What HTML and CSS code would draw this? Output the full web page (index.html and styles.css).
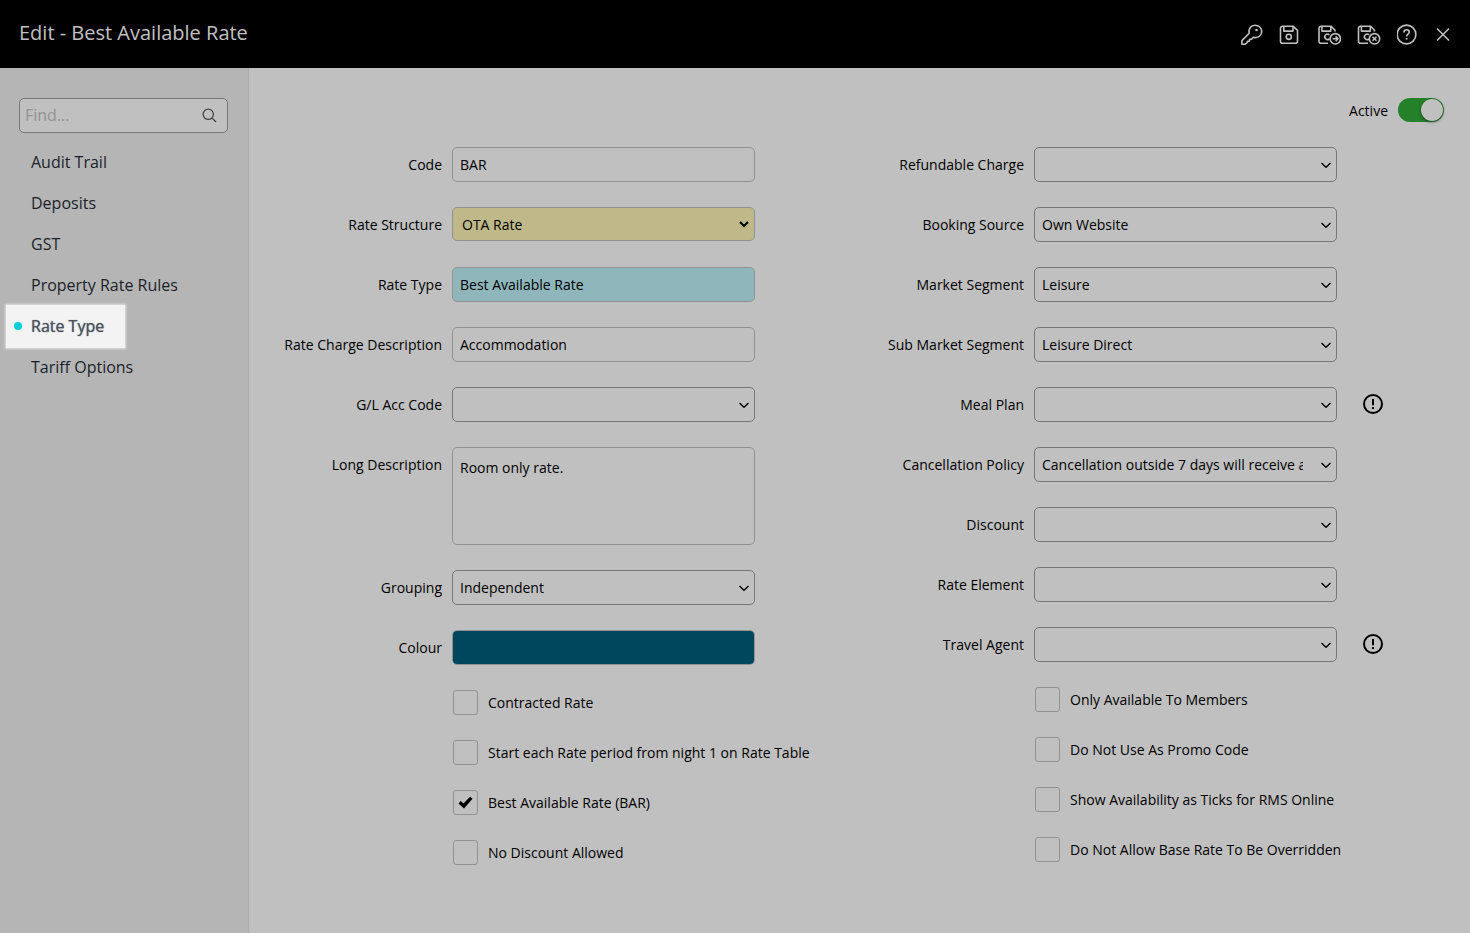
FILE: index.html
```html
<!DOCTYPE html>
<html lang="en">
<head>
  <meta charset="UTF-8" />
  <meta name="viewport" content="width=device-width, initial-scale=1.0"/>
  <title>Edit - Best Available Rate</title>
  <link rel="stylesheet" href="styles.css">
</head>
<body>
  <header class="topbar">
    <h1>Edit - Best Available Rate</h1>
    <div class="tools">
      <button type="button" aria-label="Security">
        <svg width="22" height="24" viewBox="0 0 22 24"><path d="M8.2 11.2C7.2 6.8 10 3.2 14 3.2c3.8 0 6.7 2.8 6.7 6.3 0 3.7-3 6.3-6.9 6.1l-1.500-.3-1.700 1.900H8.500v2H6.400v1.300L4.300 22.200H.9v-3.600z"/><circle class="dot" cx="15.5" cy="8" r="1.3"/></svg>
      </button>
      <button type="button" aria-label="Save">
        <svg width="22" height="24" viewBox="0 0 22 24"><path d="M3.5 4.3h10.700l4.300 4v10.900a2 2 0 0 1-2 2h-13a2 2 0 0 1-2-2v-12.900a2 2 0 0 1 2-2zM4.800 4.500v4.600h9.200v-4.600"/><circle cx="9.8" cy="14.8" r="2.6"/></svg>
      </button>
      <button type="button" aria-label="Save and continue">
        <svg width="24" height="24" viewBox="0 0 24 24"><path d="M11 21.200H4a2 2 0 0 1-2-2V6.300a2 2 0 0 1 2-2h10.200l3.800 4v1.200M4.900 4.500v4.600h8.900v-4.600M12.400 12.900a2.700 2.700 0 1 0 0 3.900"/><circle cx="18.3" cy="16.8" r="5.2"/><path d="M15.500 16.800h5.400M18.600 14.400l2.400 2.400-2.400 2.400"/></svg>
      </button>
      <button type="button" aria-label="Save and close">
        <svg width="24" height="24" viewBox="0 0 24 24"><path d="M11 21.200H3.500a2 2 0 0 1-2-2V6.300a2 2 0 0 1 2-2h10.200l3.800 4v1.200M4.400 4.500v4.600h8.900v-4.600M12 12.900a2.700 2.700 0 1 0 0 3.900"/><circle cx="17.5" cy="16.8" r="5.2"/><path d="M15.500 14.800l4 4M19.500 14.800l-4 4"/></svg>
      </button>
      <button type="button" aria-label="Help">
        <svg width="20" height="24" viewBox="0 0 20 24"><circle cx="9.5" cy="12.5" r="9.4"/><path d="M6.900 10.400c0-1.700 1.100-2.700 2.700-2.700s2.700 1 2.700 2.400c0 1.900-2.700 2.100-2.700 4.300"/><circle class="dot" cx="9.6" cy="16.8" r="1"/></svg>
      </button>
      <button type="button" aria-label="Close">
        <svg width="20" height="24" viewBox="0 0 20 24"><path d="M4 6.500l12 12M16 6.500l-12 12"/></svg>
      </button>
    </div>
  </header>

  <div class="layout">
    <aside class="sidebar">
      <div class="search">
        <input type="text" placeholder="Find..." aria-label="Find">
        <svg width="15" height="15" viewBox="0 0 16 16"><circle cx="6.7" cy="6.7" r="5.5"/><path d="M10.800 10.800l4.200 4.200"/></svg>
      </div>
      <nav class="menu">
        <a href="#">Audit Trail</a>
        <a href="#">Deposits</a>
        <a href="#">GST</a>
        <a href="#">Property Rate Rules</a>
        <a href="#" class="current">Rate Type</a>
        <a href="#">Tariff Options</a>
      </nav>
    </aside>

    <main class="content">
      <div class="status">
        <label for="active">Active</label>
        <input type="checkbox" id="active" class="toggle" checked>
      </div>

      <form class="form">
        <!-- left column -->
        <div class="column">
          <div class="row">
            <label for="code">Code</label>
            <input type="text" id="code" class="field" value="BAR">
          </div>
          <div class="row">
            <label for="structure">Rate Structure</label>
            <select id="structure" class="field required"><option>OTA Rate</option></select>
          </div>
          <div class="row">
            <label for="type">Rate Type</label>
            <input type="text" id="type" class="field lookup" value="Best Available Rate">
          </div>
          <div class="row">
            <label for="charge">Rate Charge Description</label>
            <input type="text" id="charge" class="field" value="Accommodation">
          </div>
          <div class="row">
            <label for="gl">G/L Acc Code</label>
            <select id="gl" class="field"><option></option></select>
          </div>
          <div class="row">
            <label for="long">Long Description</label>
            <textarea id="long" class="field">Room only rate.</textarea>
          </div>
          <div class="row">
            <label for="grouping">Grouping</label>
            <select id="grouping" class="field"><option>Independent</option></select>
          </div>
          <div class="row">
            <label for="colour">Colour</label>
            <input type="color" id="colour" class="field colour" value="#00475e">
          </div>
          <div class="check"><input type="checkbox" id="contracted"><label for="contracted">Contracted Rate</label></div>
          <div class="check"><input type="checkbox" id="night"><label for="night">Start each Rate period from night 1 on Rate Table</label></div>
          <div class="check"><input type="checkbox" id="bar" checked><label for="bar">Best Available Rate (BAR)</label></div>
          <div class="check"><input type="checkbox" id="nodiscount"><label for="nodiscount">No Discount Allowed</label></div>
        </div>

        <!-- right column -->
        <div class="column">
          <div class="row">
            <label for="refundable">Refundable Charge</label>
            <select id="refundable" class="field"><option></option></select>
          </div>
          <div class="row">
            <label for="source">Booking Source</label>
            <select id="source" class="field"><option>Own Website</option></select>
          </div>
          <div class="row">
            <label for="market">Market Segment</label>
            <select id="market" class="field"><option>Leisure</option></select>
          </div>
          <div class="row">
            <label for="submarket">Sub Market Segment</label>
            <select id="submarket" class="field"><option>Leisure Direct</option></select>
          </div>
          <div class="row">
            <label for="meal">Meal Plan</label>
            <select id="meal" class="field"><option></option></select>
            <button type="button" class="info" aria-label="Meal Plan information">
              <svg width="20" height="20" viewBox="0 0 20 20"><circle cx="10" cy="10" r="9"/><path d="M10 5v6.200M10 13v2"/></svg>
            </button>
          </div>
          <div class="row">
            <label for="cancel">Cancellation Policy</label>
            <select id="cancel" class="field"><option>Cancellation outside 7 days will receive a full refund</option></select>
          </div>
          <div class="row">
            <label for="discount">Discount</label>
            <select id="discount" class="field"><option></option></select>
          </div>
          <div class="row">
            <label for="element">Rate Element</label>
            <select id="element" class="field"><option></option></select>
          </div>
          <div class="row">
            <label for="agent">Travel Agent</label>
            <select id="agent" class="field"><option></option></select>
            <button type="button" class="info" aria-label="Travel Agent information">
              <svg width="20" height="20" viewBox="0 0 20 20"><circle cx="10" cy="10" r="9"/><path d="M10 5v6.200M10 13v2"/></svg>
            </button>
          </div>
          <div class="check"><input type="checkbox" id="members"><label for="members">Only Available To Members</label></div>
          <div class="check"><input type="checkbox" id="promo"><label for="promo">Do Not Use As Promo Code</label></div>
          <div class="check"><input type="checkbox" id="ticks"><label for="ticks">Show Availability as Ticks for RMS Online</label></div>
          <div class="check"><input type="checkbox" id="override"><label for="override">Do Not Allow Base Rate To Be Overridden</label></div>
        </div>
      </form>
    </main>
  </div>
</body>
</html>
```

FILE: styles.css
```css
* { margin: 0; padding: 0; box-sizing: border-box; }

body {
  min-height: 100vh;
  display: flex;
  flex-direction: column;
  font-family: 'Open Sans', 'Noto Sans', sans-serif;
  font-size: 14px;
  color: #000;
  background: #c0c0c0;
}

input, select, textarea, button { font: inherit; color: inherit; }

svg { display: block; fill: none; }

/* header */
.topbar {
  display: flex;
  align-items: center;
  justify-content: space-between;
  height: 68px;
  padding: 0 17px 0 19px;
  background: #000;
  color: #c0c0c0;
}

.topbar h1 {
  font-size: 20px;
  font-weight: 400;
  line-height: 28px;
  padding-bottom: 2px;
}

.tools { display: flex; gap: 16px; }

.tools button { background: none; border: 0; cursor: pointer; }

.tools svg { stroke: #c0c0c0; stroke-width: 1.6; stroke-linejoin: round; }

.tools .dot { fill: #c0c0c0; stroke: none; }

/* sidebar */
.layout { display: flex; flex: 1; }

.sidebar {
  width: 249px;
  flex-shrink: 0;
  padding-top: 30px;
  background: #b5b5b5;
  border-right: 1px solid #acacac;
}

.search {
  display: flex;
  align-items: center;
  height: 35px;
  margin: 0 20px 0 19px;
  padding: 0 10px 0 5px;
  background: #c0c0c0;
  border: 1px solid #777;
  border-radius: 5px;
}

.search input {
  flex: 1;
  min-width: 0;
  padding-bottom: 2px;
  font-size: 16px;
  background: none;
  border: 0;
  outline: 0;
}

.search input::placeholder { color: #929292; }

.search svg { stroke: #444; stroke-width: 1.4; }

.menu {
  display: flex;
  flex-direction: column;
  align-items: flex-start;
  padding: 9px 0 0 7px;
}

.menu a {
  position: relative;
  padding: 0 20px 0 24px;
  font-size: 16px;
  line-height: 41px;
  color: #1b1f2a;
  text-decoration: none;
}

.menu .current {
  color: #4d5360;
  background: #f3f3f3;
  box-shadow: 0 0 0 1px #f3f3f3, 0 0 2px 2px #e0e0e0;
  text-shadow: 0 0 1px #4d5360;
  z-index: 1;
}

.menu .current::before {
  content: '';
  position: absolute;
  left: 7px;
  top: 16px;
  width: 8px;
  height: 8px;
  background: #00cfdb;
  border-radius: 50%;
}

/* form */
.content {
  flex: 1;
  min-width: 0;
  padding: 30px 26px 30px 20px;
}

.status {
  display: flex;
  align-items: center;
  justify-content: flex-end;
  gap: 10px;
  height: 24px;
}

.toggle {
  appearance: none;
  width: 46px;
  height: 24px;
  padding: 1px;
  background: #888;
  border-radius: 12px;
}

.toggle:checked { background: #25802a; }

.toggle::before {
  content: '';
  display: block;
  width: 22px;
  height: 22px;
  background: #c0c0c0;
  border-radius: 50%;
  box-shadow: 0 1px 3px #0008;
}

.toggle:checked::before { margin-left: auto; }

.form {
  display: grid;
  grid-template-columns: 1fr 1fr;
  padding: 25px 11px 0 0;
}

.column {
  display: flex;
  flex-direction: column;
  gap: 25px;
  min-width: 0;
}

.row {
  display: grid;
  grid-template-columns: 173px minmax(0, 1fr) 86px;
  gap: 10px;
  align-items: start;
  min-height: 35px;
}

.row label { line-height: 35px; text-align: right; }

.field {
  width: 100%;
  height: 35px;
  padding: 0 7px;
  background: #c0c0c0;
  border: 1px solid #929292;
  border-radius: 5px;
}

select.field {
  appearance: none;
  padding-right: 33px;
  border-color: #777;
  background: #c0c0c0 url("data:image/svg+xml,%3Csvg xmlns='http://www.w3.org/2000/svg' width='12' height='8' fill='none' stroke='%23000' stroke-width='1.3'%3E%3Cpath d='M1.5 2l4.5 4.300 4.500-4.300'/%3E%3C/svg%3E") no-repeat right 4px center;
}

select.required {
  height: 34px;
  padding-left: 9px;
  border-color: #929292;
  background-color: #bfb98a;
  background-image: url("data:image/svg+xml,%3Csvg xmlns='http://www.w3.org/2000/svg' width='12' height='8' fill='none' stroke='%23000' stroke-width='2'%3E%3Cpath d='M2 2l4 4 4-4'/%3E%3C/svg%3E");
}

.lookup { background: #8fb7bb; }

textarea.field {
  display: block;
  height: 98px;
  padding-top: 10px;
  line-height: 20px;
  resize: none;
}

.colour {
  appearance: none;
  padding: 0;
  overflow: hidden;
}

.colour::-webkit-color-swatch-wrapper { padding: 0; }

.colour::-webkit-color-swatch { border: 0; }

.info {
  width: 20px;
  margin: 7px 0 0 16px;
  background: none;
  border: 0;
}

.info svg { stroke: #000; stroke-width: 2; }

.check {
  display: flex;
  align-items: center;
  gap: 10px;
  height: 25px;
  padding-left: 184px;
  white-space: nowrap;
}

.check input {
  appearance: none;
  width: 25px;
  height: 25px;
  border: 1px solid #929292;
  border-radius: 3px;
}

.check input:checked {
  background: url("data:image/svg+xml,%3Csvg xmlns='http://www.w3.org/2000/svg' width='15' height='13'%3E%3Cpath d='M.5 7.500l2.300-2.400 2.700 2.500L12 .7l2.500 2.100L6 12.500z'/%3E%3C/svg%3E") no-repeat center;
}
```
